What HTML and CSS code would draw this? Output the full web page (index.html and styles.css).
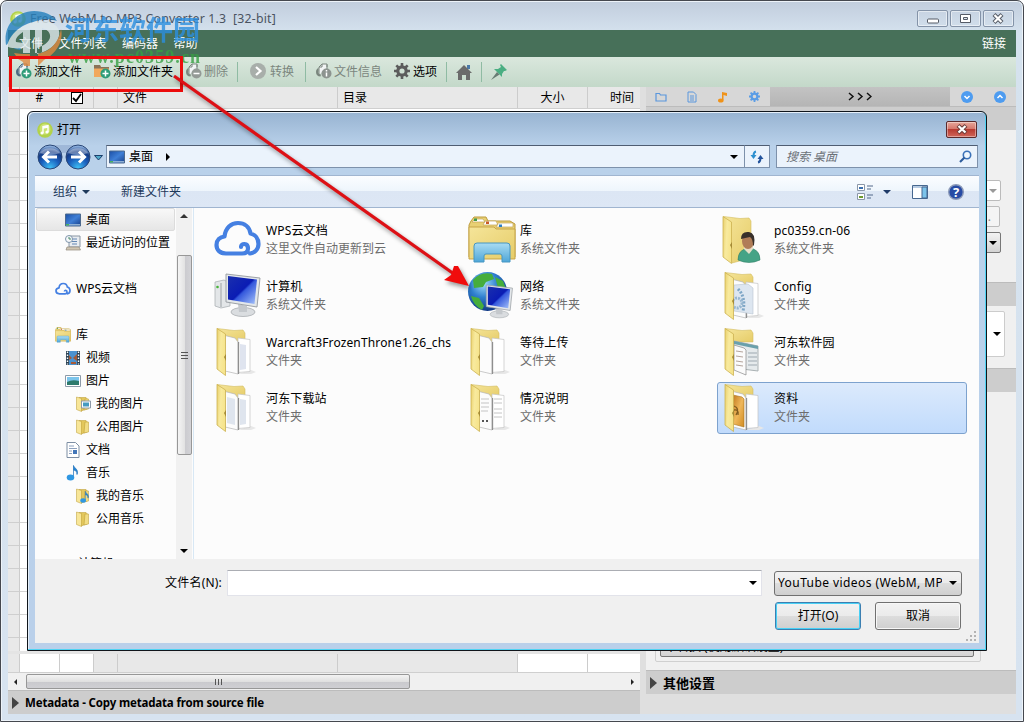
FILE: index.html
```html
<!DOCTYPE html>
<html lang="zh-CN">
<head>
  <meta charset="UTF-8">
  <title>Free WebM to MP3 Converter 1.3</title>
  <link rel="stylesheet" href="styles.css">
</head>
<body>
  <svg class="defs" width="0" height="0">
    <defs>
      <linearGradient id="gFolder" x1="0" y1="0" x2="1" y2="1">
        <stop offset="0" stop-color="#f5e59a"/><stop offset="1" stop-color="#e6cc68"/>
      </linearGradient>
      <linearGradient id="gLeaf" x1="0" y1="0" x2="1" y2="0.3">
        <stop offset="0" stop-color="#e9d06d"/><stop offset="0.5" stop-color="#f8ea9e"/><stop offset="1" stop-color="#f6e48c"/>
      </linearGradient>
      <linearGradient id="gScreen" x1="0" y1="0" x2="1" y2="1">
        <stop offset="0" stop-color="#1a2fae"/><stop offset="0.5" stop-color="#0a1cb4"/><stop offset="0.55" stop-color="#3458dc"/><stop offset="1" stop-color="#a9c6fb"/>
      </linearGradient>
      <linearGradient id="gBlue" x1="0" y1="0" x2="0" y2="1">
        <stop offset="0" stop-color="#a9dcf2"/><stop offset="1" stop-color="#4fa6d8"/>
      </linearGradient>
      <linearGradient id="gDesk" x1="0" y1="0" x2="1" y2="1">
        <stop offset="0" stop-color="#1b4fa6"/><stop offset="0.5" stop-color="#3f7fd6"/><stop offset="1" stop-color="#173f8a"/>
      </linearGradient>
      <linearGradient id="gOrange" x1="0" y1="0" x2="1" y2="1">
        <stop offset="0" stop-color="#c27a20"/><stop offset="0.5" stop-color="#efb75a"/><stop offset="1" stop-color="#d18c22"/>
      </linearGradient>
      <radialGradient id="gNav" cx="0.5" cy="0.95" r="0.9">
        <stop offset="0" stop-color="#3fc0f5"/><stop offset="0.45" stop-color="#1a5fbd"/><stop offset="0.75" stop-color="#153c86"/><stop offset="1" stop-color="#8db0dd"/>
      </radialGradient>
      <radialGradient id="gGlobe" cx="0.4" cy="0.3" r="0.7">
        <stop offset="0" stop-color="#9fdcfa"/><stop offset="0.5" stop-color="#2f7fd0"/><stop offset="1" stop-color="#123b86"/>
      </radialGradient>
      <symbol id="app" viewBox="0 0 16 16">
        <circle cx="8" cy="8" r="7.8" fill="#b2d24a"/><circle cx="8" cy="7" r="5.5" fill="#cbe272"/>
        <path d="M6 11V4.5l5-1V10M6 6l5-1" fill="none" stroke="#fff" stroke-width="1.4"/>
        <circle cx="5" cy="11" r="1.6" fill="#fff"/><circle cx="10" cy="10" r="1.6" fill="#fff"/>
      </symbol>
      <symbol id="folder" viewBox="0 0 48 48">
        <path d="M3 0.500L28 2l2.500 3v8L28 44l-17 2z" fill="none"/>
        <path d="M3 0.500L20 2.500l9-0.500 2 3v9H11z" fill="url(#gFolder)" stroke="#d3bd62" stroke-width="0.600"/>
      </symbol>
      <symbol id="leaf" viewBox="0 0 48 48">
        <path d="M3 0.500l8.500 5.500v41.500L3 41z" fill="url(#gLeaf)" stroke="#cdb352" stroke-width="0.800"/>
        <path d="M12 26l-2 3 2 4z" fill="#a58a35"/>
      </symbol>
      <symbol id="papers" viewBox="0 0 48 48">
        <path d="M37 42l5 2-5 2H24z" fill="#e7e7e7"/>
        <path d="M24 10l12 1.500v32l-12 1z" fill="#fff" stroke="#c3c3c3" stroke-width="0.700"/>
        <path d="M11 7.500l10 2.500 3 4v32l-13-3z" fill="#fcfcfc" stroke="#b5b5b5" stroke-width="0.700"/>
        <path d="M24.500 14v32" stroke="#8f8f8f" stroke-width="1.300"/>
      </symbol>
      <symbol id="monitor" viewBox="0 0 48 48">
        <ellipse cx="29" cy="40" rx="12" ry="4.500" fill="#dadde0" stroke="#a9adb1" stroke-width="0.800"/>
        <path d="M24 32l9 2v6h-8z" fill="#c4c8cc"/>
        <path d="M12 2l34 4-3 29-31-5z" fill="#e3e7ea" stroke="#94999e" stroke-width="0.900"/>
        <path d="M14 4l29 3.500-2.500 24.500L14 27.500z" fill="url(#gScreen)"/>
      </symbol>
      <symbol id="smallfolder" viewBox="0 0 16 16">
        <path d="M4 1.500h7l1 1V13l-6 2z" fill="#e3c75c" stroke="#b9982f" stroke-width="0.500"/>
        <path d="M10 3h3.500v10L9 14z" fill="#f1dc84" stroke="#b9982f" stroke-width="0.500"/>
        <path d="M1.500 1l5 1.500V15.500L1.500 13.500z" fill="#f8e698" stroke="#b9982f" stroke-width="0.500"/>
      </symbol>
      <symbol id="desktop" viewBox="0 0 16 16">
        <path d="M0.500 2h15v12h-15z" fill="url(#gDesk)" stroke="#4d6a8e"/>
        <path d="M1 12h14V13.500H1z" fill="#8fb0d5"/><path d="M1 12h3v1.500H1z" fill="#4ab061"/>
      </symbol>
      <symbol id="cloud" viewBox="0 0 48 48">
        <path d="M27 31c0-4 7-4.500 7 1.500 0 4-3 5-6 5H12C6 37.500 2.500 34 2.500 29c0-5 3.500-8 8-8.500C11.500 12 17 7 24 7c6.500 0 11.500 4 12.500 10.500 4.500 1 8 5 8 10.500 0 5.500-4 9-8.500 9.500" fill="none" stroke="#4580e2" stroke-width="4.200" stroke-linecap="round" stroke-linejoin="round"/>
      </symbol>
      <symbol id="smallcloud" viewBox="0 0 16 16">
        <path d="M9.500 10.500c0-1.500 2.500-1.500 2.500 0.500 0 1.500-1 1.800-2 1.800H4.500C2.500 12.800 1 11.500 1 9.800 1 8 2.300 7 4 6.800 4.300 4 6 2.500 8.300 2.500c2.200 0 3.700 1.400 4 3.500 1.500 0.400 2.700 1.800 2.700 3.500 0 1.800-1.300 3.200-3 3.300" fill="none" stroke="#4580e2" stroke-width="1.700"/>
      </symbol>
      <symbol id="library" viewBox="0 0 48 48">
        <path d="M3 5l3-4h12l2 4h22l5 3v33H1V9z" fill="#e8d074" stroke="#bd9c3e"/>
        <path d="M4 6l3-3h8l2 3zM15 9l2-4h11l2 4zM28 11l2-4h15v4z" fill="#fff" stroke="#c3a553" stroke-width="0.700"/>
        <path d="M6 2.500h3v2.500H6z" fill="#3f9b4a"/><path d="M18 5.500h3V8h-3z" fill="#c85a28"/><path d="M31 8.500h3V11h-3z" fill="#2d7fc4"/>
        <path d="M1 11h25l2 2h19v30H1z" fill="url(#gFolder)" stroke="#c7a548"/>
        <path d="M6 46V30q0-3 3-3h30q3 0 3 3v16h-8v-6q0-2-2-2H18q-2 0-2 2v6z" fill="url(#gBlue)" stroke="#4696c2"/>
      </symbol>
      <symbol id="page" viewBox="0 0 16 16">
        <path d="M2 0.500h8.500L14 4v11.500H2z" fill="#fff" stroke="#7d8ea3"/>
        <path d="M4 4h5M4 6.500h8M4 9h3M4 11.500h3" stroke="#7f95b5" stroke-width="0.900"/><path d="M8 8h4v4H8z" fill="#4376b8"/>
      </symbol>
      <symbol id="note" viewBox="0 0 16 16">
        <path d="M8.500 12V0.500c1 3 5.500 4 3.500 9 0-3-1-4-3.500-4.500" fill="#2383d5" stroke="#1d6fb8" stroke-width="0.700"/><ellipse cx="5.500" cy="12.500" rx="3.800" ry="3" fill="#2f97e2"/>
      </symbol>
      <symbol id="file" viewBox="0 0 16 16">
        <path d="M4 12V4L7 1h5v3" fill="#f2f4f5" stroke="currentColor"/><path d="M7 1v3H4M12 1.500V7" fill="none" stroke="currentColor"/>
        <path d="M5.500 13.500A4.600 4.600 0 0 1 1 9c0-2 1-3.500 2.500-4v3A2.500 2.500 0 0 0 6 11.500" fill="currentColor"/>
      </symbol>
      <symbol id="gear" viewBox="0 0 16 16">
        <circle cx="8" cy="8" r="4.200" fill="none" stroke="currentColor" stroke-width="3.200"/>
        <path d="M8 0v3M8 13v3M0 8h3M13 8h3M2.300 2.300l2.200 2.200M11.500 11.500l2.200 2.200M2.300 13.700l2.200-2.200M11.500 4.500l2.200-2.200" stroke="currentColor" stroke-width="2.600"/>
      </symbol>
    </defs>
  </svg>

  <div class="window">
    <header class="titlebar">
      <svg class="app-icon" width="16" height="16"><use href="#app"/></svg>
      <span class="title">Free WebM to MP3 Converter 1.3&nbsp; [32-bit]</span>
      <div class="controls">
        <span class="ctl"><svg width="31" height="17"><rect x="10.500" y="9" width="11" height="4" rx="1" fill="#fff" stroke="#555b66"/></svg></span>
        <span class="ctl"><svg width="31" height="17"><path d="M10.500 4.500h10v8h-10z" fill="#fff" stroke="#555b66"/><path d="M13.500 7.500h4v2h-4z" fill="#dce4ec" stroke="#555b66"/></svg></span>
        <span class="ctl"><svg width="31" height="17"><path d="M11 4.500l8 8M19 4.500l-8 8" stroke="#555b66" stroke-width="4.200"/><path d="M11.500 5l7 7M18.500 5l-7 7" stroke="#fff" stroke-width="2.200"/></svg></span>
      </div>
    </header>

    <nav class="menubar">
      <span>文件</span><span>文件列表</span><span>编码器</span><span>帮助</span>
      <span class="links">链接</span>
    </nav>

    <div class="toolbar">
      <span class="tool">
        <svg class="slate" width="17" height="16" viewBox="0 0 17 16"><use href="#file" width="16" height="16"/><circle cx="11.500" cy="10.500" r="5" fill="#2f9c78"/><path d="M11.500 7.500v6M8.500 10.500h6" stroke="#fff" stroke-width="1.500"/></svg>添加文件
      </span>
      <span class="tool">
        <svg width="17" height="16" viewBox="0 0 17 16"><path d="M0 2h6l1 2h8v10H0z" fill="#f1a85d"/><path d="M0 2h6l1 2h8v1.500H0z" fill="#8a7358"/><circle cx="11.500" cy="10.500" r="5" fill="#2f9c78"/><path d="M11.500 7.500v6M8.500 10.500h6" stroke="#fff" stroke-width="1.500"/></svg>添加文件夹
      </span>
      <span class="tool off">
        <svg width="17" height="16" viewBox="0 0 17 16"><use href="#file" width="16" height="16"/><circle cx="11.500" cy="10.500" r="5" fill="#949a96"/><path d="M8.500 10.500h6" stroke="#fff" stroke-width="1.500"/></svg>删除
      </span>
      <i class="sep wide"></i>
      <span class="tool off convert">
        <svg width="17" height="16" viewBox="0 0 17 16"><circle cx="8" cy="8" r="8" fill="#a8aeaa"/><path d="M6 4l4.500 4L6 12" fill="none" stroke="#fff" stroke-width="2.200"/></svg>转换
      </span>
      <i class="sep"></i>
      <span class="tool off">
        <svg width="17" height="16" viewBox="0 0 17 16"><use href="#file" width="16" height="16"/><circle cx="11.500" cy="10.500" r="5" fill="#8d9490"/><path d="M11.500 9.500v4M11.500 7v1.500" stroke="#fff" stroke-width="1.500"/></svg>文件信息
      </span>
      <span class="tool">
        <svg class="dim" width="17" height="16" viewBox="0 0 17 16"><use href="#gear" width="16" height="16"/></svg>选项
      </span>
      <i class="sep"></i>
      <svg class="home" width="16" height="16"><path d="M11 1h3v4h-3z" fill="#4a78a8"/><path d="M0 9l8-8 8 8h-2v7h-4v-5H6v5H2V9z" fill="#6b6b6b"/></svg>
      <i class="sep"></i>
      <svg width="16" height="16"><path d="M10 0l6 6-2 1h-1l-2 3v3L3 5h4l3-2-1-2z" fill="#4aae82"/><path d="M6 8l2.500 2.500L0 16z" fill="#687b73"/></svg>
    </div>

    <div class="workspace">
      <section class="list">
        <div class="row head">
          <span class="c0"></span><span class="c1">#</span><span class="c2"><i class="check"><svg width="10" height="10"><path d="M1 5l3 3 5-7" fill="none" stroke="#000" stroke-width="1.800"/></svg></i></span><span class="c3"></span><span class="c4">文件</span><span class="c5">目录</span><span class="c6">大小</span><span class="c7">时间</span>
        </div>
        <div class="grid"><div class="gutter"></div></div>
        <div class="row last">
          <span class="c0"></span><span class="c1"></span><span class="c2"></span><span class="c3"></span><span class="c4"></span><span class="c5"></span><span class="c6"></span><span class="c7"></span>
        </div>
        <div class="hscroll">
          <i class="tri left"></i>
          <span class="hthumb"><i></i><i></i><i></i></span>
          <i class="tri right"></i>
        </div>
        <div class="fold"><i class="fold-arrow"></i>Metadata - Copy metadata from source file</div>
      </section>

      <aside class="panel">
        <div class="tabs">
          <span class="tab"><svg width="12" height="10"><path d="M1 9V1.500h3.500l1 1.500H11v6z" fill="none" stroke="#5b97dd" stroke-width="1.200"/></svg></span>
          <span class="tab"><svg width="10" height="12"><path d="M1 1h5.500L9 3.500V11H1zM3 5h4M3 7h4M3 9h4" fill="none" stroke="#5b97dd"/></svg></span>
          <span class="tab"><svg width="12" height="12"><path d="M5 9V1l5 1v3L6.500 4v5" fill="#f09218"/><ellipse cx="3.800" cy="9.500" rx="2.800" ry="2" fill="#f09218"/></svg></span>
          <span class="tab blue"><svg width="11" height="11"><use href="#gear"/></svg></span>
          <span class="tab more"><svg width="24" height="9"><path d="M1 1l4 3.500L1 8M10 1l4 3.500L10 8M19 1l4 3.500L19 8" fill="none" stroke="#111" stroke-width="1.500"/></svg></span>
          <span class="tab end"><svg width="12" height="12"><circle cx="6" cy="6" r="6" fill="#4e9cf0"/><path d="M3.500 5L6 7.500 8.500 5" fill="none" stroke="#fff" stroke-width="1.500"/></svg></span>
          <span class="tab end"><svg width="12" height="12"><circle cx="6" cy="6" r="6" fill="#4e9cf0"/><path d="M3.500 7L6 4.500 8.500 7" fill="none" stroke="#fff" stroke-width="1.500"/></svg></span>
        </div>
        <div class="bar"></div>
        <div class="part one">
          <div class="combo pale"><i class="tri down"></i></div>
          <div class="combo field">.</div>
          <div class="combo"><i class="tri down"></i></div>
        </div>
        <div class="bar"></div>
        <div class="part two"><div class="combo tall"><i class="tri down"></i></div></div>
        <div class="bar"></div>
        <div class="part three"><div class="group"><div class="combo preset">不转换 (使用默认设置)</div></div></div>
        <div class="bar other"><i class="fold-arrow"></i>其他设置</div>
      </aside>
    </div>
  </div>

  <div class="dialog">
    <div class="dlg-title">
      <svg width="16" height="16"><use href="#app"/></svg><span>打开</span>
      <i class="dlg-close"><svg width="29" height="15"><path d="M11 3.500l8 7.500M19 3.500l-8 7.500" stroke="#6b3b38" stroke-width="4.200"/><path d="M11.500 4l7 6.500M18.500 4l-7 6.500" stroke="#fff" stroke-width="2.300"/></svg></i>
    </div>
    <div class="address-row">
      <svg class="nav-buttons" width="68" height="26">
        <path d="M13 1h29v5q-14 6-29 0z" fill="#9fb8d8"/>
        <circle cx="14" cy="13" r="12" fill="url(#gNav)" stroke="#2a4777"/><circle cx="42" cy="13" r="12" fill="url(#gNav)" stroke="#2a4777"/>
        <path d="M4 9a11 8 0 0 1 20 0q-10 4-20 0zM32 9a11 8 0 0 1 20 0q-10 4-20 0z" fill="#fff" opacity="0.350"/>
        <path d="M21 13H8M13 7.500L7.500 13l5.500 5.500M35 13h13M43 7.500l5.500 5.500-5.500 5.500" fill="none" stroke="#fff" stroke-width="3"/>
        <path d="M58.500 11.500h8L62.500 16z" fill="#4fa9c9" stroke="#1d3f6c"/>
      </svg>
      <div class="address">
        <svg width="16" height="16"><use href="#desktop"/></svg><span>桌面</span><i class="tri right"></i>
        <i class="tri down"></i>
      </div>
      <div class="refresh"><svg width="14" height="14"><path d="M6 1.500Q3.500 2 3.500 6" fill="none" stroke="#2d8fcf" stroke-width="2"/><path d="M0.500 5h6L3.500 9z" fill="#2d8fcf"/><path d="M8 12.500q2.500-0.500 2.500-4.500" fill="none" stroke="#24549c" stroke-width="2"/><path d="M7.500 9h6L10.500 5z" fill="#24549c"/></svg></div>
      <div class="search"><span>搜索 桌面</span><svg width="13" height="13"><circle cx="8" cy="5" r="3.700" fill="#eef6fd" stroke="#3a71b8" stroke-width="1.600"/><path d="M5.500 7.500L1 12" stroke="#2d5c9c" stroke-width="2.200"/></svg></div>
    </div>

    <div class="commands">
      <span>组织</span><i class="tri down"></i><span class="new">新建文件夹</span>
      <svg class="view" width="34" height="16"><path d="M0.500 0.500h7v6h-7zM0.500 9.500h7v6h-7z" fill="#fff" stroke="#8a97a8"/><path d="M2 3h4v2H2z" fill="#3a6fae"/><path d="M2 12h4v2H2z" fill="#6d9b2f"/><path d="M10 2h6M10 5h4M10 11h6M10 14h4" stroke="#53688a"/><path d="M26 6h8l-4 4z" fill="#1f3a68"/></svg>
      <svg class="preview" width="16" height="14"><path d="M0.500 0.500h15v13h-15z" fill="#fff" stroke="#46678f"/><path d="M1 1h14v2H1z" fill="#b7cbe2"/><path d="M10 2h5v11h-5z" fill="#7cc3ea" stroke="#46678f"/></svg>
      <svg class="help" width="16" height="16"><circle cx="8" cy="8" r="7.300" fill="#274ba5" stroke="#8c9ab8" stroke-width="1.400"/><text x="8" y="12.500" text-anchor="middle" fill="#fff" font-size="13" font-weight="bold">?</text></svg>
    </div>

    <div class="browse">
      <div class="tree">
        <div class="node l2 current"><svg width="16" height="16"><use href="#desktop"/></svg>桌面</div>
        <div class="node l2"><svg width="16" height="16"><path d="M4 1h11v11H4z" fill="#e8ecf0" stroke="#8a96a3"/><path d="M7 4h5M7 6.500h5M7 9h5" stroke="#6488b5"/><path d="M2 12h12l1.500 3H1z" fill="#cfc5b2" stroke="#928a7c" stroke-width="0.700"/><circle cx="4" cy="4" r="3.500" fill="#f6f8fa" stroke="#7f95ab"/><path d="M4 2v2h2" fill="none" stroke="#486"/></svg>最近访问的位置</div>
        <div class="node"></div>
        <div class="node l1"><svg width="16" height="16"><use href="#smallcloud"/></svg>WPS云文档</div>
        <div class="node"></div>
        <div class="node l1"><svg width="16" height="16"><use href="#library"/></svg>库</div>
        <div class="node l2"><svg width="16" height="16"><path d="M1 1h14v14H1z" fill="#2e4354"/><path d="M4 1h8v14H4z" fill="#4c92cf"/><path d="M4 5l3 3-3 2zM12 4L8 8l4 3zM6 12h5v2H6z" fill="#a65a36"/><path d="M2.500 1.500v13M13.500 1.500v13" stroke="#fff" stroke-width="1.400" stroke-dasharray="1.500 1.500"/></svg>视频</div>
        <div class="node l2"><svg width="16" height="16"><path d="M0.500 2.500h15v11h-15z" fill="#fff" stroke="#8d9aa8"/><path d="M2 4h12v8H2z" fill="#7cc5ec"/><path d="M2 9q5-3 12-1v4H2z" fill="#2d7a6c"/></svg>图片</div>
        <div class="node l3"><svg width="16" height="16"><use href="#smallfolder"/><path d="M6.500 5h9v7h-9z" fill="#fff" stroke="#8d9aa8"/><path d="M8 6.500h6v4H8z" fill="#459ac0"/></svg>我的图片</div>
        <div class="node l3"><svg width="16" height="16"><use href="#smallfolder"/></svg>公用图片</div>
        <div class="node l2"><svg width="16" height="16"><use href="#page"/></svg>文档</div>
        <div class="node l2"><svg width="16" height="16"><use href="#note"/></svg>音乐</div>
        <div class="node l3"><svg width="16" height="16"><use href="#smallfolder"/><use href="#note" x="4" y="3" width="12" height="12"/></svg>我的音乐</div>
        <div class="node l3"><svg width="16" height="16"><use href="#smallfolder"/></svg>公用音乐</div>
        <div class="node"></div>
        <div class="node l1 cut"><svg width="16" height="16"><path d="M3 3h12v5H3z" fill="#9a9a9a"/></svg>计算机</div>
      </div>
      <div class="vscroll"><i class="tri up"></i><span class="vthumb"><i></i><i></i><i></i></span><i class="tri down"></i></div>

      <div class="files">
        <div class="tile"><svg width="48" height="48"><use href="#cloud"/></svg><p>WPS云文档<small>这里文件自动更新到云</small></p></div>
        <div class="tile"><svg width="48" height="48"><use href="#library"/></svg><p>库<small>系统文件夹</small></p></div>
        <div class="tile"><svg width="48" height="48"><path d="M1.500 0.500L18 2.500l9-0.500 2 3v37l-19 5z" fill="url(#gFolder)" stroke="#d3bd62" stroke-width="0.600"/><use href="#leaf" x="-2"/><path d="M16 44q0-11 11-12 11 1 11 12-11 5-22 0z" fill="#45a386" stroke="#2f7f66" stroke-width="0.600"/><path d="M22 33l5 5 4-5v-4h-9z" fill="#e6dfc9"/><ellipse cx="26" cy="25" rx="6" ry="8" fill="#b07d58"/><path d="M19 23q0-8 8-7 7 1 5 13l-1 1q0-7-3-9-5 1-9 2z" fill="#38302b"/></svg><p>pc0359.cn-06<small>系统文件夹</small></p></div>

        <div class="tile"><svg width="48" height="48"><path d="M1 10l9-2 6 3v23l-9 2-6-2z" fill="#e3e6e8" stroke="#a4a9ad" stroke-width="0.700"/><path d="M7 11v24" stroke="#9ca1a5"/><circle cx="3.500" cy="15" r="1.300" fill="#48b33a"/><use href="#monitor"/></svg><p>计算机<small>系统文件夹</small></p></div>
        <div class="tile"><svg width="48" height="48"><circle cx="19.500" cy="19.500" r="19.500" fill="url(#gGlobe)"/><path d="M5 8Q13-1 24 2l2 5-8 3-3 5-9 1zM27 5l8 4 3 8-8-1zM3 24l8 2 5 8-2 4q-9-5-11-14z" fill="#46ad3c"/><use href="#monitor" x="9" y="11" width="37" height="38"/></svg><p>网络<small>系统文件夹</small></p></div>
        <div class="tile"><svg width="48" height="48"><use href="#folder"/><use href="#papers"/><path d="M12 13l14-1 5 4v26l-19-3z" fill="#dde6f0" stroke="#b9c5d2" stroke-width="0.600"/><path d="M16 17q8 8 5 22" fill="none" stroke="#7ea6c6" stroke-width="3" stroke-dasharray="2 1.500"/><circle cx="15" cy="31" r="5" fill="none" stroke="#98b7d0" stroke-width="3" stroke-dasharray="2 1"/><use href="#leaf"/></svg><p>Config<small>文件夹</small></p></div>

        <div class="tile"><svg width="48" height="48"><use href="#folder"/><use href="#papers"/><path d="M26 16l6 1v24l-6 1z" fill="#dfe4ef"/><use href="#leaf"/></svg><p>Warcraft3FrozenThrone1.26_chs<small>文件夹</small></p></div>
        <div class="tile"><svg width="48" height="48"><use href="#folder"/><use href="#papers"/><use href="#leaf"/></svg><p>等待上传<small>文件夹</small></p></div>
        <div class="tile"><svg width="48" height="48"><use href="#folder"/><path d="M12 13l24 5v25l-24-3z" fill="#e5eaec" stroke="#a9b1b3"/><path d="M12 13l24 5v3l-24-5z" fill="#6aa0ab"/><path d="M26 25h9M26 29h9M26 33h9M26 37h9" stroke="#b5bfc3" stroke-width="1.500"/><path d="M12 17l10 3 2 2v25l-12-5z" fill="#fbfbfb" stroke="#888" stroke-width="0.700"/><path d="M14 23l7 1M14 28l7 1M14 33l7 1M14 37l7 1" stroke="#b5a59c"/><use href="#leaf"/></svg><p>河东软件园<small>文件夹</small></p></div>

        <div class="tile"><svg width="48" height="48"><use href="#folder"/><use href="#papers"/><path d="M13 13l8 2v26l-8-2zM26 15l6 1v24l-6 1z" fill="#dfe5ee"/><use href="#leaf"/></svg><p>河东下载站<small>文件夹</small></p></div>
        <div class="tile"><svg width="48" height="48"><use href="#folder"/><use href="#papers"/><path d="M13 15h8M13 19h8M13 23h8M13 27h7M26 15h8M26 19h8M26 25h8M26 29h8M26 33h8" stroke="#c4c4c4"/><path d="M14 36l2 2M16 36l-2 2M18 36l2 2M20 36l-2 2" stroke="#555"/><use href="#leaf"/></svg><p>情况说明<small>文件夹</small></p></div>
        <div class="tile selected"><svg width="48" height="48"><use href="#folder"/><use href="#papers"/><path d="M11 11l9 2 2 2v28l-11-3z" fill="url(#gOrange)" stroke="#a87320" stroke-width="0.600"/><path d="M12 22q6 2 2 9M12 26q5-1 4 5" fill="none" stroke="#815a1e" stroke-width="1.300"/><use href="#leaf"/></svg><p>资料<small>文件夹</small></p></div>
      </div>
    </div>

    <div class="foot">
      <div class="name-row">
        <label>文件名(N):</label>
        <div class="filename"><i class="tri down"></i></div>
        <div class="filter"><span>YouTube videos (WebM, MP4)</span><i class="tri down"></i></div>
      </div>
      <div class="actions"><button class="primary">打开(O)</button><button>取消</button></div>
      <svg class="grip" width="10" height="10"><path d="M8 1h2M4 5h2M8 5h2M0 9h2M4 9h2M8 9h2" stroke="#b3b3b3" stroke-width="2"/></svg>
    </div>
  </div>

  <!-- site watermark -->
  <svg class="watermark" width="210" height="72">
    <path d="M6 45C3 26 15 12 34 11c10 0 19 4 23 10-9-3-19-2-25 2C24 27 13 32 8 44z" fill="#2480bd"/>
    <path d="M9 40q5-12 18-15-9 7-12 15 1 5 8 6l-3 4Q8 48 9 40z" fill="#2b87bf"/>
    <path d="M7 46C11 31 26 21 42 21c12 0 19 7 17 15-2 9-10 15-22 18v-6c9-3 14-8 13-13-1-4-4-6-8-7v25h-7V30l-5-1v24h-7v-5c-7 1-14 0-16-2zM23 32c-5 3-8 7-7 10l7 1z" fill="#dfe9ec" fill-rule="evenodd"/>
    <path d="M61 29c3 12-5 25-17 31l-6 6V54c13-3 21-12 23-25zM22 54h8v12h-6l-1-4-5-3-4-6z" fill="#e1893f"/>
    <text class="wm-name" x="65" y="40" textLength="135" lengthAdjust="spacingAndGlyphs">河东软件园</text>
    <text class="wm-url" x="68" y="63" textLength="132">www.pc0359.cn</text>
  </svg>
  <!-- callout -->
  <div class="mark"></div>
  <svg class="arrow" width="480" height="300">
    <path d="M174 76L454 274" stroke="#dd1015" stroke-width="3.200"/>
    <path d="M469 286l-25-6 7-5 3-9 4 0z" fill="#f00c0c"/>
  </svg>
</body>
</html>
```

FILE: styles.css
```css
* {
  box-sizing: border-box;
}

body {
  margin: 0;
  width: 1024px;
  height: 722px;
  overflow: hidden;
  position: relative;
  background: #fff;
  color: #000;
  font-family: "Noto Sans", "Noto Sans CJK SC", sans-serif;
  font-size: 12px;
  line-height: 18px;
}

svg {
  display: block;
  flex: none;
}

.defs {
  position: absolute;
}

/* main window */
.window {
  width: 1024px;
  height: 722px;
  border: 1px solid #45484f;
  border-radius: 7px 7px 0 0;
  background: linear-gradient(#c1cddd, #d5e2ee 32px, #d7e3f0);
  box-shadow: inset 0 0 0 1px #edf3f9;
  padding: 0 7px 7px;
  display: flex;
  flex-direction: column;
}

.titlebar {
  height: 29px;
  display: flex;
  align-items: center;
  flex: none;
  padding-top: 6px;
}

.app-icon {
  margin: 0 4px 0 2px;
}

.title {
  color: #4a5360;
  font-size: 12.3px;
  letter-spacing: 0.2px;
}

.controls {
  margin-left: auto;
  margin-right: 2px;
  display: flex;
  gap: 2px;
}

.ctl {
  width: 31px;
  height: 17px;
  border: 1px solid #8493a8;
  border-radius: 2px;
  box-shadow: inset 0 0 0 1px rgba(255, 255, 255, 0.5);
}

.ctl svg {
  margin: -1px;
}

.menubar {
  height: 27px;
  flex: none;
  background: #477059;
  color: #fff;
  display: flex;
  align-items: center;
  padding: 0 10px 0 11px;
  gap: 15.5px;
}

.links {
  margin-left: auto;
}

.toolbar {
  height: 30px;
  flex: none;
  background: linear-gradient(#dae7dd, #c3d8c9);
  display: flex;
  align-items: center;
  padding-left: 7px;
}

.tool {
  display: flex;
  gap: 2px;
  margin-right: 12px;
  white-space: nowrap;
}

.tool.convert {
  gap: 3px;
  margin-right: 14px;
}

.slate {
  color: #4c6b80;
}

.dim {
  color: #5c5c5c;
}

.off {
  color: #7b867e;
}

.sep {
  width: 1px;
  height: 20px;
  background: #8fbba3;
  margin: 0 9px 0 -3px;
}

.sep.wide {
  margin-right: 12px;
}

.home {
  margin-right: 12px;
}

.workspace {
  display: flex;
  flex: 1;
  min-height: 0;
  background: #dfdfdf;
}

.list {
  width: 632px;
  margin-right: 6px;
  display: flex;
  flex-direction: column;
}

.row {
  display: flex;
  background: #e8e8e8;
}

.row span {
  border-right: 1px solid #ccc;
  height: 100%;
}

.row .c0 { width: 12px; }
.row .c1 { width: 40px; text-align: center; }
.row .c2 { width: 34px; }
.row .c3 { width: 24px; }
.row .c4 { width: 220px; padding-left: 5px; }
.row .c5 { width: 180px; padding-left: 5px; }
.row .c6 { width: 70px; text-align: center; }
.row .c7 { width: 52px; padding-left: 22px; border: 0; }

.head {
  height: 21px;
  line-height: 21px;
  flex: none;
}

.check {
  display: block;
  width: 12px;
  height: 12px;
  margin: 5px 0 0 11px;
  border: 1px solid #000;
  background: #fff;
}

.grid {
  height: 543px;
  flex: none;
  background: repeating-linear-gradient(#fff 0, #fff 22px, #d3d3d3 22px, #d3d3d3 23px);
  border-top: 1px solid #cfcfcf;
}

.gutter {
  width: 12px;
  height: 100%;
  background: repeating-linear-gradient(#e9e9e9 0, #e9e9e9 22px, #cfcfcf 22px, #cfcfcf 23px);
  border-right: 1px solid #ccc;
}

.last {
  height: 21px;
  border-top: 3px solid #e4e4e4;
}

.last .c1, .last .c2, .last .c6, .last .c7 {
  background: #fff;
}

.hscroll {
  height: 18px;
  flex: none;
  background: #f0f0f0;
  border-top: 1px solid #cfcfcf;
  display: flex;
  align-items: center;
  padding: 0 6px;
}

.hthumb {
  width: 384px;
  height: 15px;
  margin-left: 9px;
  border: 1px solid #979797;
  border-radius: 2px;
  background: linear-gradient(#f3f3f3, #e0e0e0 50%, #c9c9cd 51%, #cfcfd3);
  display: flex;
  justify-content: center;
  align-items: center;
  gap: 2px;
}

.hthumb i {
  width: 1px;
  height: 6px;
  background: #555;
}

.hscroll .right {
  margin-left: auto;
}

.fold, .bar {
  height: 24px;
  flex: none;
  background: #cdcdcd;
  border-top: 1px solid #bcbcbc;
  display: flex;
  align-items: center;
  font-weight: bold;
}

.fold {
  font-size: 11.5px;
  letter-spacing: -0.16px;
}

.other {
  font-size: 13px;
}

.fold-arrow {
  width: 0;
  height: 0;
  border: 6px solid transparent;
  border-left: 7px solid #444;
  border-right: 0;
  margin: 0 6px 0 4px;
}

/* triangles used by combos and scrollbars */
.tri {
  width: 0;
  height: 0;
  flex: none;
  border: 4px solid transparent;
}

.tri.down { border-top-color: #000; border-bottom: 0; }
.tri.up { border-bottom-color: #444; border-top: 0; }
.tri.left { border-right-color: #222; border-left: 0; border-width: 3px; border-left-width: 0; }
.tri.right { border-left-color: #222; border-width: 3px; border-right-width: 0; }

/* settings column */
.panel {
  width: 370px;
  display: flex;
  flex-direction: column;
}

.tabs {
  display: flex;
  height: 19px;
  flex: none;
}

.tab {
  width: 31px;
  background: #d7d7d7;
  display: flex;
  align-items: center;
  justify-content: center;
}

.tab.blue { color: #5b9de6; }
.tab.more { width: 181px; background: linear-gradient(#c3c3c3, #b5b5b5); }
.tab.end { width: 33px; }

.part {
  background: #f0f0f0;
  flex: none;
  padding-right: 15px;
}

.part.one { height: 152px; padding-top: 50px; }
.part.two { height: 62px; padding: 5px 11px 0 0; }
.part.three { height: 278px; padding-left: 9px; }

.combo {
  border: 1px solid #777;
  border-radius: 2px;
  height: 21px;
  background: linear-gradient(#f2f2f2, #d3d3d3);
  display: flex;
  align-items: center;
  justify-content: flex-end;
  padding-right: 3px;
}

.combo.pale {
  background: #fff;
  border-color: #bbb;
}

.pale .tri.down {
  border-top-color: #999;
}

.combo.field {
  background: #f4f4f4;
  border-color: #bbb;
  margin: 5px 1px 5px 0;
  color: #888;
  padding-right: 8px;
}

.combo.tall {
  height: 46px;
  background: #fff;
  border-color: #ccc;
}

.group {
  width: 326px;
  height: 270px;
  border: 1px solid #d0d0d0;
  border-radius: 2px;
  padding: 243px 6px 0 4px;
}

.combo.preset {
  justify-content: flex-start;
  padding-left: 4px;
  line-height: 14px;
}

/* open dialog */
.dialog {
  position: absolute;
  left: 27px;
  top: 111px;
  width: 960px;
  height: 540px;
  border: 1px solid #10151b;
  border-radius: 6px 6px 0 0;
  box-shadow: inset -1px -1px #4fd3f3, inset 1px 1px #e5eff9;
  background: linear-gradient(#97b3d1, #b9d1ea 34px, #bad0ea);
  padding: 0 7px 7px;
  display: flex;
  flex-direction: column;
}

.dlg-title {
  height: 33px;
  flex: none;
  display: flex;
  align-items: center;
  gap: 4px;
  padding: 2px 0 0 2px;
}

.dlg-close {
  width: 31px;
  height: 17px;
  margin: 0 2px 0 auto;
  border: 1px solid #5b2a2c;
  border-radius: 2px;
  background: linear-gradient(#e6a79a, #d5756a 48%, #b83b31 50%, #d0665a);
  box-shadow: inset 0 0 0 1px rgba(255, 255, 255, 0.4);
}

.address-row {
  height: 30px;
  flex: none;
  display: flex;
  padding-left: 1px;
}

.nav-buttons {
  margin-top: -1px;
  width: 70px;
}

.address, .refresh, .search {
  height: 23px;
  background: #ebf3fc;
  border: 1px solid #7d91ab;
  border-top-color: #4f5d72;
  display: flex;
  align-items: center;
}

.address {
  width: 639px;
  padding: 0 6px 0 2px;
}

.address span {
  margin: 0 13px 0 4px;
}

.address .tri.right {
  border-width: 4px;
  border-right-width: 0;
  border-left-color: #000;
}

.address .tri.down {
  margin-left: auto;
}

.refresh {
  width: 26px;
  margin-left: -1px;
  justify-content: center;
}

.search {
  width: 202px;
  margin-left: 6px;
  padding: 0 5px 0 9px;
  justify-content: space-between;
  color: #6b7178;
  font-style: italic;
}

.commands {
  height: 33px;
  flex: none;
  border: 1px solid #a0b5d0;
  border-width: 1px 0;
  background: linear-gradient(#fbfdff, #eef5fc 48%, #dce6f4 50%, #dde7f5);
  display: flex;
  align-items: center;
  padding: 0 15px 0 18px;
  color: #1e395b;
}

.commands .tri {
  margin-left: 5px;
  border-top-color: #1e395b;
}

.new {
  margin-left: 31px;
}

.view { margin-left: auto; }
.preview { margin: 0 20px 0 21px; }

.browse {
  height: 351px;
  flex: none;
  display: flex;
  background: #fcfcfc;
}

.tree {
  width: 141px;
  overflow: hidden;
}

.node {
  height: 23px;
  display: flex;
  align-items: center;
  white-space: nowrap;
  gap: 5px;
}

.l1 { padding-left: 20px; }
.l2 { padding-left: 30px; }
.l3 { padding-left: 40px; }

.current {
  margin: 0 1px;
  padding-left: 28px;
  border: 1px solid #dcdcdc;
  border-radius: 2px;
  background: linear-gradient(#f8f8f8, #e6e6e6);
}

/* last node is clipped by the pane's lower edge */
.cut {
  margin-top: -1px;
  padding-left: 22px;
}

.vscroll {
  width: 16px;
  background: #f1f1f1;
  display: flex;
  flex-direction: column;
  align-items: center;
  padding: 6px 0 6px;
}

.vthumb {
  width: 15px;
  height: 200px;
  margin: 37px 0 auto;
  border: 1px solid #979797;
  border-radius: 2px;
  background: linear-gradient(90deg, #f4f4f4, #e3e3e3 50%, #cbcbcf 52%, #d3d3d7);
  display: flex;
  flex-direction: column;
  justify-content: center;
  align-items: center;
  gap: 2px;
}

.vthumb i {
  width: 7px;
  height: 1px;
  background: #555;
}

.vscroll .tri.up {
  border-bottom-color: #333;
}

.files {
  flex: 1;
  border-left: 1px solid #d8e8f5;
  margin-left: 1px;
  display: grid;
  grid-template-columns: repeat(3, 250px);
  grid-auto-rows: 52px;
  gap: 4px;
  padding: 6px 0 0 15px;
}

.tile {
  display: flex;
  align-items: center;
  gap: 4px;
  border: 1px solid transparent;
  border-radius: 3px;
  padding-left: 4px;
}

.tile p {
  margin: 0;
  white-space: nowrap;
  letter-spacing: 0.14px;
}

.tile small {
  display: block;
  font-size: 12px;
  letter-spacing: 0;
  color: #6d6d6d;
}

.selected {
  border-color: #7da2ce;
  background: linear-gradient(#dceafc, #c1dbfc);
}

.foot {
  height: 85px;
  background: #f0f0f0;
  padding-top: 11px;
  position: relative;
}

.name-row {
  display: flex;
  align-items: center;
}

.name-row label {
  width: 187px;
  text-align: right;
  margin-right: 5px;
  letter-spacing: 0.2px;
}

.filename {
  width: 535px;
  height: 26px;
  background: #fff;
  border: 1px solid #e2e3ea;
  border-top-color: #abadb3;
  display: flex;
  align-items: center;
  justify-content: flex-end;
  padding-right: 4px;
}

.filter {
  width: 188px;
  height: 25px;
  margin-left: 12px;
  border: 1px solid #707070;
  border-radius: 3px;
  background: linear-gradient(#f2f2f2, #ebebeb 49%, #ddd 50%, #cfcfcf);
  display: flex;
  align-items: center;
  padding: 0 4px 0 3px;
}

.filter span {
  width: 164px;
  overflow: hidden;
  white-space: nowrap;
  margin-right: auto;
  letter-spacing: 0.42px;
}

.actions {
  display: flex;
  justify-content: flex-end;
  gap: 14px;
  margin: 6px 18px 0 0;
}

button {
  width: 86px;
  height: 28px;
  border: 1px solid #707070;
  border-radius: 3px;
  background: linear-gradient(#f2f2f2, #ebebeb 49%, #ddd 50%, #cfcfcf);
  box-shadow: inset 0 0 0 1px #f7f7f7;
  font: inherit;
  padding: 0;
}

.primary {
  border-color: #3c7fb1;
  box-shadow: inset 0 0 0 1px #48d0f5;
}

.grip {
  position: absolute;
  right: 3px;
  bottom: 2px;
}

/* overlays */
.watermark, .arrow {
  position: absolute;
  left: 0;
  top: 0;
}

.watermark {
  opacity: 0.8;
}

.wm-name {
  font-family: "Noto Sans CJK SC", sans-serif;
  font-size: 27px;
  font-weight: bold;
  fill: #2b8fe0;
}

.wm-url {
  font-family: "Liberation Serif", serif;
  font-size: 18px;
  font-weight: bold;
  fill: #37a043;
}

.mark {
  position: absolute;
  left: 9px;
  top: 56px;
  width: 174px;
  height: 36px;
  border: 3px solid #ec0b0b;
}

.arrow {
  filter: drop-shadow(2px 3px 2px rgba(0, 0, 0, 0.4));
}
```
